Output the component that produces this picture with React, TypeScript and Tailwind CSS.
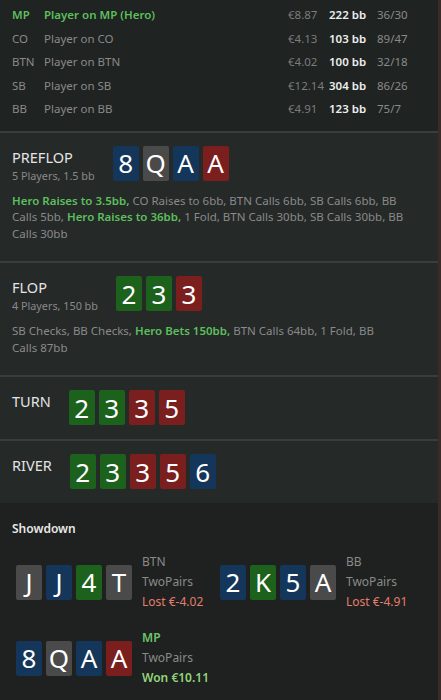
import React from "react";

type Suit = "blue" | "gray" | "red" | "green";
type Card = [string, Suit];

const suitBg: Record<Suit, string> = {
  blue: "bg-[#14365a]",
  gray: "bg-[#4a4a4a]",
  red: "bg-[#7b1e1e]",
  green: "bg-[#1c611c]",
};

const players = [
  { pos: "MP", name: "Player on MP (Hero)", money: "€8.87", bb: "222 bb", stats: "36/30", hero: true },
  { pos: "CO", name: "Player on CO", money: "€4.13", bb: "103 bb", stats: "89/47" },
  { pos: "BTN", name: "Player on BTN", money: "€4.02", bb: "100 bb", stats: "32/18" },
  { pos: "SB", name: "Player on SB", money: "€12.14", bb: "304 bb", stats: "86/26" },
  { pos: "BB", name: "Player on BB", money: "€4.91", bb: "123 bb", stats: "75/7" },
];

const streets: {
  name: string;
  sub?: string;
  cards: Card[];
  actions?: [string, boolean][];
  wrap?: string;
}[] = [
  {
    name: "PREFLOP",
    sub: "5 Players, 1.5 bb",
    cards: [["8", "blue"], ["Q", "gray"], ["A", "blue"], ["A", "red"]],
    wrap: "pr-[5px]",
    actions: [
      ["Hero Raises to 3.5bb", true],
      ["CO Raises to 6bb", false],
      ["BTN Calls 6bb", false],
      ["SB Calls 6bb", false],
      ["BB Calls 5bb", false],
      ["Hero Raises to 36bb", true],
      ["1 Fold", false],
      ["BTN Calls 30bb", false],
      ["SB Calls 30bb", false],
      ["BB Calls 30bb", false],
    ],
  },
  {
    name: "FLOP",
    sub: "4 Players, 150 bb",
    cards: [["2", "green"], ["3", "green"], ["3", "red"]],
    wrap: "pr-[36px]",
    actions: [
      ["SB Checks", false],
      ["BB Checks", false],
      ["Hero Bets 150bb", true],
      ["BTN Calls 64bb", false],
      ["1 Fold", false],
      ["BB Calls 87bb", false],
    ],
  },
  {
    name: "TURN",
    cards: [["2", "green"], ["3", "green"], ["3", "red"], ["5", "red"]],
  },
  {
    name: "RIVER",
    cards: [["2", "green"], ["3", "green"], ["3", "red"], ["5", "red"], ["6", "blue"]],
  },
];

const showdown: { pos: string; cards: Card[]; result: string; won?: boolean }[] = [
  { pos: "BTN", cards: [["J", "gray"], ["J", "blue"], ["4", "green"], ["T", "gray"]], result: "Lost €-4.02" },
  { pos: "BB", cards: [["2", "blue"], ["K", "green"], ["5", "blue"], ["A", "gray"]], result: "Lost €-4.91" },
  { pos: "MP", cards: [["8", "blue"], ["Q", "gray"], ["A", "blue"], ["A", "red"]], result: "Won €10.11", won: true },
];

function Cards({ cards }: { cards: Card[] }) {
  return (
    <div className="flex shrink-0 gap-[4px]">
      {cards.map(([rank, suit], i) => (
        <div
          key={i}
          className={`flex h-[35px] w-[26px] items-center justify-center rounded-[2px] text-[26px] leading-none text-white ${suitBg[suit]}`}
        >
          {rank}
        </div>
      ))}
    </div>
  );
}

export default function App() {
  return (
    <div className="flex min-h-[700px] w-[441px] font-['Noto_Sans',sans-serif]">
      <div className="flex w-[438px] flex-col">
        {/* players */}
        <div className="bg-[#1f2321] pt-[3px] pb-[10px] text-[11.5px]">
          {players.map((p) => (
            <div key={p.pos} className="flex h-[23.5px] items-center pl-3">
              <span className={`w-[32px] ${p.hero ? "font-semibold text-[#5cbf5c]" : "text-[#8a8a8a]"}`}>{p.pos}</span>
              <span className={`w-[244px] ${p.hero ? "font-semibold text-[#5cbf5c]" : "text-[#8a8a8a]"}`}>{p.name}</span>
              <span className="w-[41px] text-[#7c7c7c]">{p.money}</span>
              <span className="w-[48px] font-semibold text-[#eeeeee]">{p.bb}</span>
              <span className="text-[#8a8a8a]">{p.stats}</span>
            </div>
          ))}
        </div>

        {/* streets */}
        {streets.map((s) => (
          <div
            key={s.name}
            className={`border-t-2 border-[#393d3c] bg-[#252928] px-3 pt-[13px] ${s.actions ? "pb-[19px]" : "pb-[14px]"}`}
          >
            <div className="flex items-start gap-[18px]">
              <div className="pt-[1px]">
                <div className="text-[14.5px] leading-[20px] text-[#e4e4e4]">{s.name}</div>
                {s.sub && <div className="mt-[1px] text-[10.8px] text-[#8a8a8a]">{s.sub}</div>}
              </div>
              <Cards cards={s.cards} />
            </div>
            {s.actions && (
              <p className={`mt-[9px] text-[11.5px] leading-[16.5px] text-[#8a8a8a] ${s.wrap}`}>
                {s.actions.map(([a, hero], i) => {
                  const txt = a + (i < s.actions!.length - 1 ? ", " : "");
                  return hero ? (
                    <span key={i} className="font-semibold text-[#5cbf5c]">
                      {txt}
                    </span>
                  ) : (
                    <span key={i}>{txt}</span>
                  );
                })}
              </p>
            )}
          </div>
        ))}

        {/* showdown */}
        <div className="flex-1 bg-[#1e211f] pt-[17px]">
          <div className="px-3 text-[12px] font-semibold text-[#e8e8e8]">Showdown</div>
          <div className="mt-[14px] flex flex-wrap gap-y-[16px] pl-4">
            {showdown.map((p) => (
              <div key={p.pos} className="flex w-[204px] items-center gap-[10px]">
                <Cards cards={p.cards} />
                <div className="flex flex-col text-[12px] leading-[20px]">
                  <span className={p.won ? "font-semibold text-[#6cc46c]" : "text-[#8a8a8a]"}>{p.pos}</span>
                  <span className="text-[#8a8a8a]">TwoPairs</span>
                  <span className={p.won ? "font-semibold text-[#93d57c]" : "text-[#e47d6d]"}>{p.result}</span>
                </div>
              </div>
            ))}
          </div>
        </div>
      </div>
      <div className="w-[3px] bg-[#3a2b28]" />
    </div>
  );
}
